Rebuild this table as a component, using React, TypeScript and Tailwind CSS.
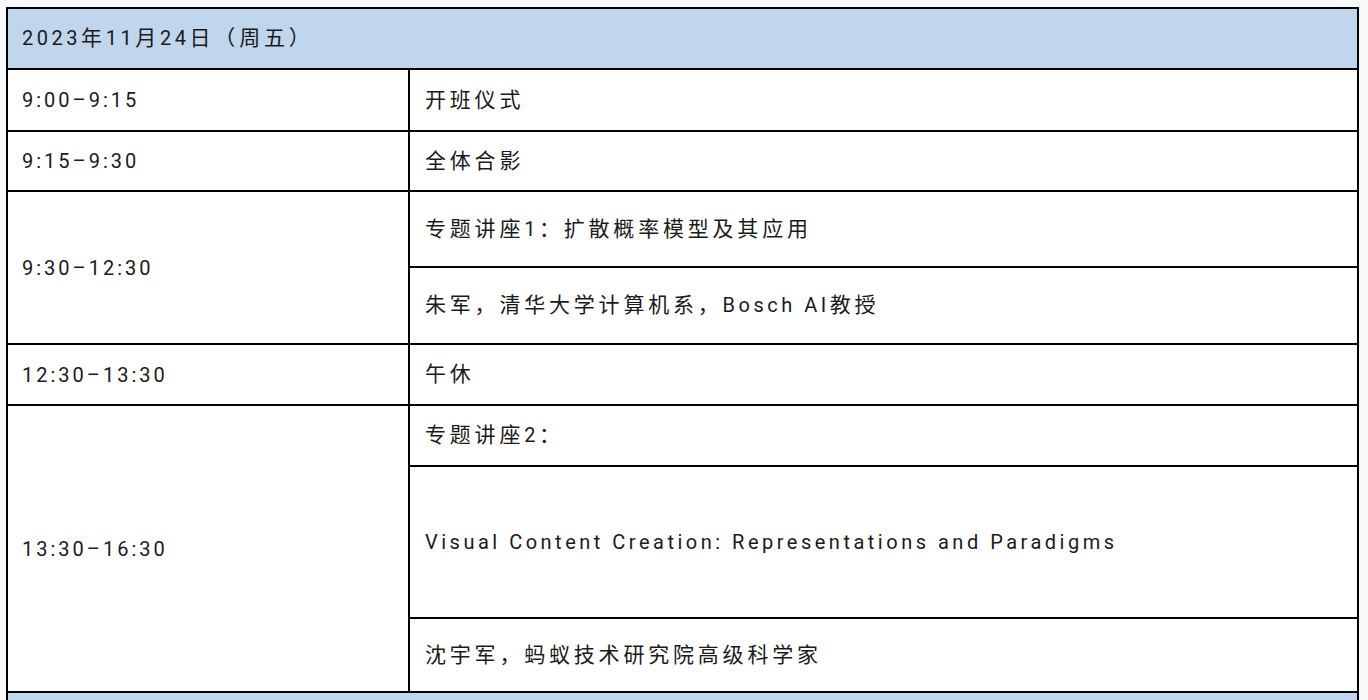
// split text into CJK / latin runs so each gets its own spacing
function T({ children, tight }: { children: string; tight?: boolean }) {
  const parts = children.split(/([\u3000-\u9fff\uff00-\uffef]+)/).filter(Boolean);
  return (
    <span>
      {parts.map((p, i) =>
        /[\u3000-\u9fff\uff00-\uffef]/.test(p) ? (
          <span key={i} className="text-[21px] tracking-[3.8px]">
            {p}
          </span>
        ) : (
          <span key={i} className={tight ? "tracking-[3px]" : "tracking-[3.5px]"}>
            {p}
          </span>
        )
      )}
    </span>
  );
}

export default function App() {
  const cell = "bg-white flex items-center pl-[15px] text-[#1a1a1a]";
  const timeCell = "bg-white flex items-center pl-[14px] text-[#1a1a1a]";

  return (
    <div
      className="min-h-screen bg-[#f8f9fa] pl-[6px] pt-[7px]"
      style={{ fontFamily: '"Roboto", "Noto Sans CJK SC", sans-serif' }}
    >
      <div className="w-[1353px] grid grid-cols-[400px_947px] grid-rows-[59px_60px_58px_74px_75px_59px_59px_150px_72px_40px] gap-[2px] bg-black p-[2px] text-[20px] leading-none">
        {/* date header */}
        <div className="col-span-2 bg-[#bfd6ec] flex items-center pl-[14px] text-[#1a1a1a]">
          <T>2023年11月24日（周五）</T>
        </div>

        <div className={timeCell}>
          <T tight>9:00–9:15</T>
        </div>
        <div className={cell}>
          <T>开班仪式</T>
        </div>

        <div className={timeCell}>
          <T tight>9:15–9:30</T>
        </div>
        <div className={cell}>
          <T>全体合影</T>
        </div>

        <div className={timeCell + " row-span-2"}>
          <T tight>9:30–12:30</T>
        </div>
        <div className={cell}>
          <T>专题讲座1：扩散概率模型及其应用</T>
        </div>
        <div className={cell}>
          <T>朱军，清华大学计算机系，Bosch AI教授</T>
        </div>

        <div className={timeCell}>
          <T tight>12:30–13:30</T>
        </div>
        <div className={cell}>
          <T>午休</T>
        </div>

        <div className={timeCell + " row-span-3"}>
          <T tight>13:30–16:30</T>
        </div>
        <div className={cell}>
          <T>专题讲座2：</T>
        </div>
        <div className={cell}>
          <T>Visual Content Creation: Representations and Paradigms</T>
        </div>
        <div className={cell}>
          <T>沈宇军，蚂蚁技术研究院高级科学家</T>
        </div>

        {/* next day header, cut off */}
        <div className="col-span-2 bg-[#bfd6ec]"></div>
      </div>
    </div>
  );
}
